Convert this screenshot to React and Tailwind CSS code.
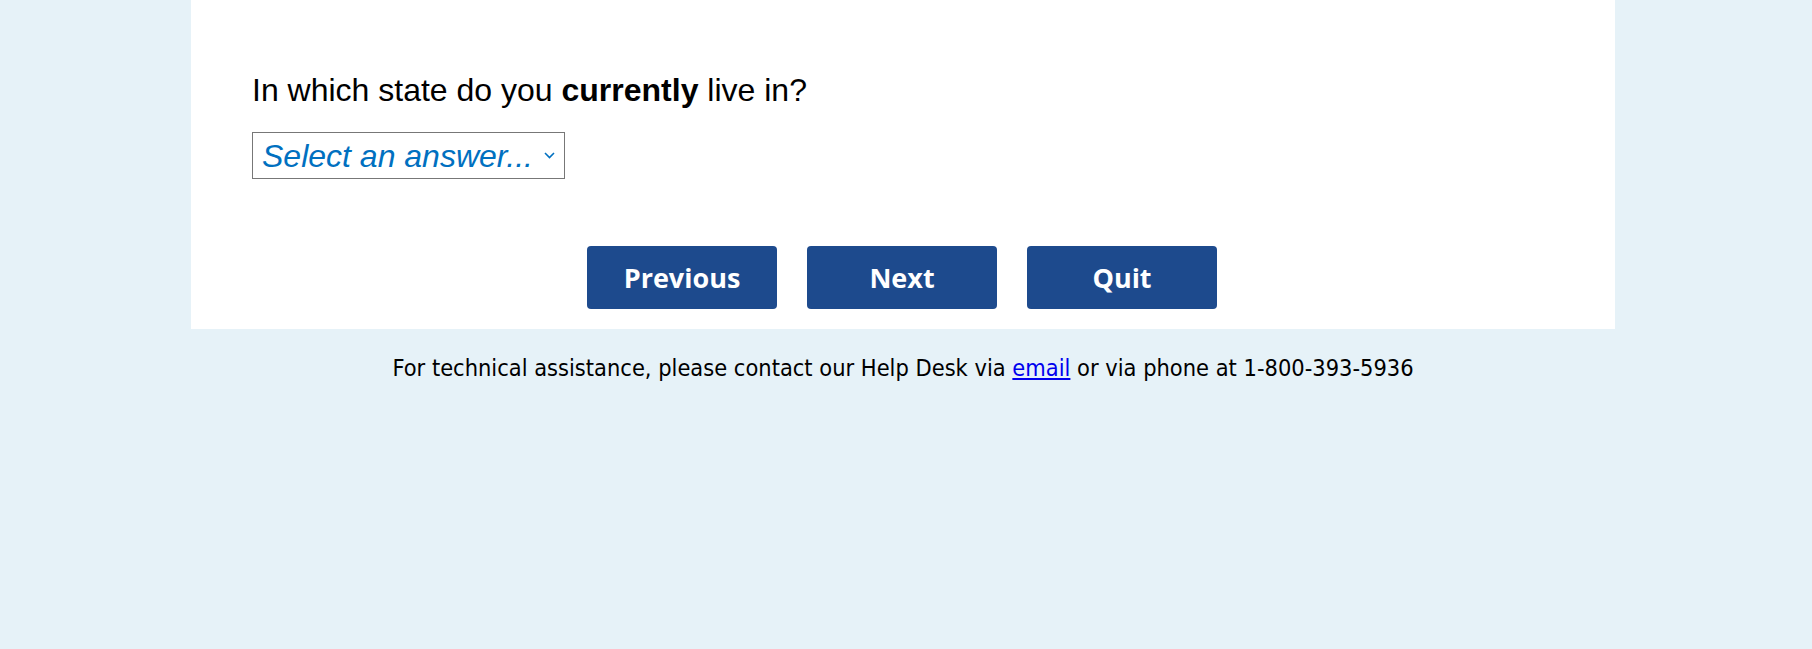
import React from 'react';

const ChevronDown = () => (
    <svg width="11" height="7" viewBox="0 0 11 7" fill="none" className="shrink-0">
        <path d="M1 1l4.5 4.5L10 1" stroke="#0070c0" strokeWidth="1.6" />
    </svg>
);

const NavButton = ({ label }) => (
    <button
        type="button"
        className="w-[190px] h-[63px] rounded-[4px] bg-[#1d4a8d] text-white text-[27px] font-bold font-['Open_Sans',sans-serif] leading-none"
    >
        {label}
    </button>
);

const App = () => {
    return (
        <div className="min-h-[649px] w-full bg-[#e6f2f8]">
            <div className="ml-[191px] w-[1424px] bg-white pl-[61px] pt-[73px] pb-[20px]">
                <p className="text-[32px] leading-[35px] text-black font-['Liberation_Sans',Arial,sans-serif]">
                    In which state do you <b>currently</b> live in?
                </p>
                <div className="mt-[24px] w-[313px] h-[47px] border border-[#777777] flex items-center justify-between pl-[9px] pr-[9px]">
                    <span className="text-[32px] italic text-[#0070c0] font-['Liberation_Sans',Arial,sans-serif] leading-none">
                        Select an answer...
                    </span>
                    <ChevronDown />
                </div>
                <div className="mt-[67px] -ml-[63px] flex justify-center gap-[30px]">
                    <NavButton label="Previous" />
                    <NavButton label="Next" />
                    <NavButton label="Quit" />
                </div>
            </div>
            <div className="ml-[191px] w-[1424px] pt-[26px] text-center text-[23.4px] leading-[26px] text-black font-['DejaVu_Sans_Condensed','Liberation_Sans',sans-serif]">
                For technical assistance, please contact our Help Desk via{' '}
                <a href="#" className="text-[#0000ee] underline">email</a> or via phone at 1-800-393-5936
            </div>
        </div>
    );
};

export default App;
